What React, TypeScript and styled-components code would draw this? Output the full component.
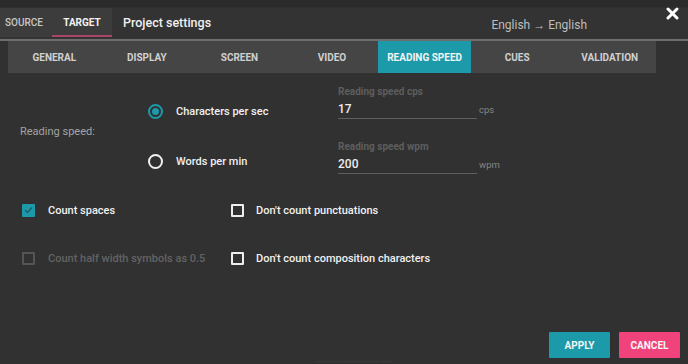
import React from "react";
import styled, { createGlobalStyle } from "styled-components";

const Global = createGlobalStyle`
  html, body { margin: 0; padding: 0; background: #313131; }
  body { font-family: Roboto, "Noto Sans", "Liberation Sans", sans-serif; }
  * { box-sizing: border-box; }
`;

const TEAL = "#1c9aaa";

const Page = styled.div`
  width: 688px;
  height: 364px;
  background: #313131;
  display: flex;
  flex-direction: column;
  overflow: hidden;
  position: relative;
`;

const Header = styled.div`
  height: 41px;
  padding-top: 8px;
  display: flex;
  align-items: flex-start;
  background: linear-gradient(#2b2b2b 0, #2b2b2b 7px, #333 8px);
  border-bottom: 2px solid #6e6e6e;
`;

const LangTabs = styled.div`
  display: flex;
  height: 29px;
  background: #3c3c3c;
`;

const LangTab = styled.div<{ $active?: boolean }>`
  width: ${(p) => (p.$active ? 60 : 52)}px;
  display: flex;
  align-items: center;
  justify-content: ${(p) => (p.$active ? "center" : "flex-start")};
  padding-left: ${(p) => (p.$active ? 0 : 5)}px;
  font-size: 10px;
  font-weight: ${(p) => (p.$active ? 700 : 500)};
  color: ${(p) => (p.$active ? "#f2f2f2" : "#c8c8c8")};
  border-bottom: 2px solid ${(p) => (p.$active ? "#a8466a" : "transparent")};
  padding-top: 2px;
`;

const Title = styled.div`
  margin-left: 11px;
  height: 29px;
  display: flex;
  align-items: center;
  font-size: 12.5px;
  font-weight: 500;
  color: #f0f0f0;
`;

const Lang = styled.div`
  margin-left: auto;
  margin-top: 10px;
  font-size: 12px;
  color: #bdbdbd;
`;

const Close = styled.div`
  margin-left: 79px;
  margin-right: 9px;
  margin-top: -1px;
  width: 13px;
  height: 13px;
  display: flex;
`;

const TabBar = styled.div`
  margin-left: 8px;
  width: 648px;
  height: 32px;
  display: flex;
  background: #454545;
`;

const Tab = styled.div<{ $active?: boolean }>`
  flex: 1;
  display: flex;
  align-items: center;
  justify-content: center;
  font-size: 10px;
  font-weight: 700;
  color: ${(p) => (p.$active ? "#f4f4f4" : "#d0d0d0")};
  background: ${(p) => (p.$active ? TEAL : "transparent")};
`;

const SpeedSection = styled.div`
  display: flex;
  padding: 13px 0 0 20px;
`;

const SideLabel = styled.div`
  width: 128px;
  align-self: center;
  font-size: 11px;
  color: #a3a3a3;
  padding-top: 2px;
`;

const RadioGroup = styled.div`
  width: 190px;
  padding-top: 13px;
  display: flex;
  flex-direction: column;
  gap: 26px;
`;

const OptionRow = styled.div<{ $gap: number; $disabled?: boolean }>`
  height: 24px;
  display: flex;
  align-items: center;
  gap: ${(p) => p.$gap}px;
  font-size: 11px;
  font-weight: 500;
  color: ${(p) => (p.$disabled ? "#636363" : "#f0f0f0")};
`;

const Radio = styled.span<{ $checked?: boolean }>`
  width: 15px;
  height: 15px;
  border-radius: 50%;
  border: 2px solid ${(p) => (p.$checked ? TEAL : "#f0f0f0")};
  display: flex;
  align-items: center;
  justify-content: center;
  &::after {
    content: "";
    width: 7px;
    height: 7px;
    border-radius: 50%;
    background: ${(p) => (p.$checked ? TEAL : "transparent")};
  }
`;

const Fields = styled.div`
  display: flex;
  flex-direction: column;
  gap: 22px;
`;

const Field = styled.div`
  display: flex;
  flex-direction: column;
  gap: 2px;
`;

const FieldLabel = styled.div`
  font-size: 10px;
  font-weight: 700;
  color: #5e5e5e;
  height: 12px;
  line-height: 12px;
`;

const ValueRow = styled.div`
  display: flex;
  align-items: center;
`;

const Value = styled.div`
  width: 139px;
  height: 19px;
  display: flex;
  align-items: center;
  font-size: 12px;
  font-weight: 500;
  color: #ededed;
  border-bottom: 1px solid #5e5e5e;
`;

const Unit = styled.span`
  margin-left: 2px;
  font-size: 9.5px;
  color: #858585;
`;

const Checks = styled.div`
  margin-top: 24px;
  display: grid;
  grid-template-columns: 209px 1fr;
  row-gap: 24px;
  padding-left: 22px;
`;

const Box = styled.span<{ $checked?: boolean; $disabled?: boolean }>`
  width: 13px;
  height: 13px;
  border-radius: 1px;
  display: flex;
  align-items: center;
  justify-content: center;
  background: ${(p) => (p.$checked ? TEAL : "transparent")};
  border: ${(p) =>
    p.$checked ? "none" : `2px solid ${p.$disabled ? "#555" : "#eeeeee"}`};
`;

const Footer = styled.div`
  margin-top: auto;
  display: flex;
  justify-content: flex-end;
  gap: 9px;
  padding: 0 8px 6px 0;
`;

const Button = styled.button<{ $color: string }>`
  width: 61px;
  height: 26px;
  border: none;
  border-radius: 1px;
  background: ${(p) => p.$color};
  color: #f6f6f6;
  font-family: Roboto, "Liberation Sans", sans-serif;
  font-size: 10px;
  font-weight: 700;
  padding: 0;
`;

const Faint = styled.div`
  position: absolute;
  left: 315px;
  bottom: 0;
  font-size: 5px;
  line-height: 5px;
  color: #4a4a4a;
`;

const tabs = ["GENERAL", "DISPLAY", "SCREEN", "VIDEO", "READING SPEED", "CUES", "VALIDATION"];

export default function App() {
  return (
    <Page>
      <Global />
      <Header>
        <LangTabs>
          <LangTab>SOURCE</LangTab>
          <LangTab $active>TARGET</LangTab>
        </LangTabs>
        <Title>Project settings</Title>
        <Lang>English → English</Lang>
        <Close>
          <svg width="13" height="13" viewBox="0 0 13 13">
            <path d="M2 2 L11 11 M11 2 L2 11" stroke="#fff" strokeWidth="3" strokeLinecap="round" />
          </svg>
        </Close>
      </Header>
      <TabBar>
        {tabs.map((t) => (
          <Tab key={t} $active={t === "READING SPEED"}>
            {t}
          </Tab>
        ))}
      </TabBar>
      <SpeedSection>
        <SideLabel>Reading speed:</SideLabel>
        <RadioGroup>
          <OptionRow $gap={13}>
            <Radio $checked />
            Characters per sec
          </OptionRow>
          <OptionRow $gap={13}>
            <Radio />
            Words per min
          </OptionRow>
        </RadioGroup>
        <Fields>
          <Field>
            <FieldLabel>Reading speed cps</FieldLabel>
            <ValueRow>
              <Value>17</Value>
              <Unit>cps</Unit>
            </ValueRow>
          </Field>
          <Field>
            <FieldLabel>Reading speed wpm</FieldLabel>
            <ValueRow>
              <Value>200</Value>
              <Unit>wpm</Unit>
            </ValueRow>
          </Field>
        </Fields>
      </SpeedSection>
      <Checks>
        <OptionRow $gap={13}>
          <Box $checked>
            <svg width="9" height="8" viewBox="0 0 9 8">
              <path d="M1 4 L3.5 6.5 L8 1.5" fill="none" stroke="#1f5d66" strokeWidth="1.4" />
            </svg>
          </Box>
          Count spaces
        </OptionRow>
        <OptionRow $gap={12}>
          <Box />
          Don't count punctuations
        </OptionRow>
        <OptionRow $gap={13} $disabled>
          <Box $disabled />
          Count half width symbols as 0.5
        </OptionRow>
        <OptionRow $gap={12}>
          <Box />
          Don't count composition characters
        </OptionRow>
      </Checks>
      <Footer>
        <Button $color={TEAL}>APPLY</Button>
        <Button $color="#f0437b">CANCEL</Button>
      </Footer>
      <Faint>—— — ——— ——————   —— — ———</Faint>
    </Page>
  );
}
